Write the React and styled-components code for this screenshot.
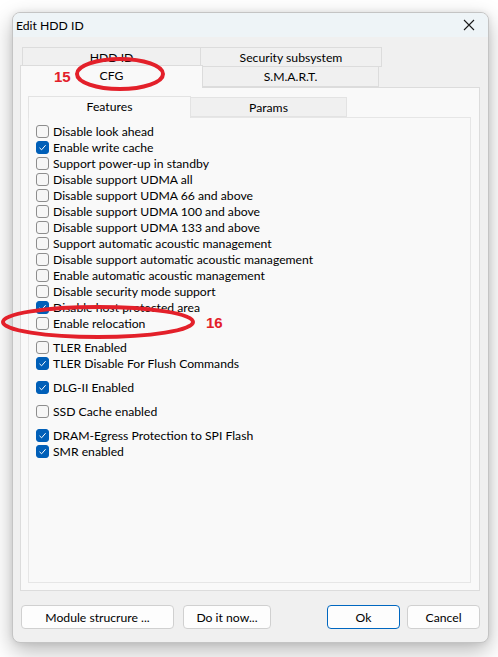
import React from 'react'
import styled, { createGlobalStyle } from 'styled-components'

const GlobalStyle = createGlobalStyle`
  html, body {
    margin: 0;
    padding: 0;
    background: #ffffff;
  }
  body {
    font-family: Lato, "Noto Sans", sans-serif;
    font-size: 12.2px;
    color: #000;
  }
`

const features = [
  [
    { text: 'Disable look ahead' },
    { text: 'Enable write cache', checked: true },
    { text: 'Support power-up in standby' },
    { text: 'Disable support UDMA all' },
    { text: 'Disable support UDMA 66 and above' },
    { text: 'Disable support UDMA 100 and above' },
    { text: 'Disable support UDMA 133 and above' },
    { text: 'Support automatic acoustic management' },
    { text: 'Disable support automatic acoustic management' },
    { text: 'Enable automatic acoustic management' },
    { text: 'Disable security mode support' },
    { text: 'Disable host protected area', checked: true },
    { text: 'Enable relocation' },
  ],
  [
    { text: 'TLER Enabled' },
    { text: 'TLER Disable For Flush Commands', checked: true },
  ],
  [{ text: 'DLG-II Enabled', checked: true }],
  [{ text: 'SSD Cache enabled' }],
  [
    { text: 'DRAM-Egress Protection to SPI Flash', checked: true },
    { text: 'SMR enabled', checked: true },
  ],
]

const Page = styled.div`
  position: relative;
  width: 498px;
  height: 657px;
  padding: 12px 0 0 12px;
  box-sizing: border-box;
`

const Window = styled.div`
  width: 477px;
  height: 631px;
  box-sizing: border-box;
  border: 1px solid #c4c4c4;
  border-radius: 8px;
  background: #f0f0f0;
  box-shadow: 0 8px 22px rgba(0, 0, 0, 0.28), 0 0 6px rgba(0, 0, 0, 0.08);
  overflow: hidden;
  display: flex;
  flex-direction: column;
`

const TitleBar = styled.div`
  height: 24px;
  flex: none;
  background: #eef4f7;
  display: flex;
  align-items: center;
  justify-content: space-between;
  padding: 0 13px 0 3px;
`

const CloseIcon = () => (
  <svg width="12" height="12" viewBox="0 0 12 12">
    <path d="M1 1 L11 11 M11 1 L1 11" stroke="#1a1a1a" strokeWidth="1.1" fill="none" />
  </svg>
)

const Body = styled.div`
  flex: 1;
  display: flex;
  flex-direction: column;
  padding: 10px 8px 13px 7px;
`

const TabRow = styled.div`
  display: flex;
  align-items: flex-end;
  height: ${p => p.$h}px;
  padding-left: ${p => p.$indent || 0}px;
  margin-top: ${p => p.$mt || 0}px;
`

const Tab = styled.div`
  box-sizing: border-box;
  width: ${p => p.$w}px;
  height: ${p => (p.$active ? p.$h + 2 : p.$h)}px;
  display: flex;
  align-items: center;
  justify-content: center;
  padding-bottom: ${p => (p.$active ? 3 : 0)}px;
  border: 1px solid #dcdcdc;
  border-bottom: ${p => (p.$active ? 'none' : '1px solid #dcdcdc')};
  background: ${p => (p.$active ? '#f9f9f9' : '#f0f0f0')};
  margin-bottom: ${p => (p.$active ? -1 : 0)}px;
  position: relative;
  z-index: ${p => (p.$active ? 2 : 0)};
  & + & {
    border-left: ${p => (p.$active ? '1px solid #dcdcdc' : 'none')};
  }
`

const Panel = styled.div`
  flex: 1;
  display: flex;
  flex-direction: column;
  box-sizing: border-box;
  border: 1px solid #dcdcdc;
  background: #f9f9f9;
  padding: ${p => p.$pad};
`

const InnerTab = styled(Tab)`
  background: ${p => (p.$active ? '#f9f9f9' : '#f0f0f0')};
  border-color: #e3e3e3;
`

const InnerPanel = styled(Panel)`
  border-color: #e6e6e6;
  background: #f9f9f9;
  padding: 5px 0 0 7px;
`

const Group = styled.div`
  margin-bottom: 8px;
`

const Row = styled.label`
  display: flex;
  align-items: center;
  height: 16px;
  white-space: nowrap;
`

const Box = styled.span`
  width: 13px;
  height: 13px;
  box-sizing: border-box;
  border-radius: 3px;
  border: 1px solid ${p => (p.$checked ? '#005fb8' : '#8d8d8d')};
  background: ${p => (p.$checked ? '#005fb8' : '#f6f6f6')};
  margin-right: 4px;
  display: flex;
  align-items: center;
  justify-content: center;
  flex: none;
`

const Check = () => (
  <svg width="9" height="9" viewBox="0 0 9 9">
    <path d="M1.5 4.8 L3.6 6.8 L7.6 2.2" stroke="#fff" strokeWidth="1" fill="none" />
  </svg>
)

const Checkbox = ({ text, checked }) => (
  <Row>
    <Box $checked={checked}>{checked && <Check />}</Box>
    <span>{text}</span>
  </Row>
)

const Buttons = styled.div`
  display: flex;
  align-items: center;
  margin-top: 14px;
  padding-left: 1px;
`

const Button = styled.div`
  box-sizing: border-box;
  width: ${p => p.$w}px;
  height: 24px;
  margin-right: ${p => p.$mr || 0}px;
  margin-left: ${p => (p.$push ? 'auto' : '0')};
  border: 1px solid ${p => (p.$default ? '#0067c0' : '#d0d0d0')};
  border-radius: 4px;
  background: #fdfdfd;
  display: flex;
  align-items: center;
  justify-content: center;
`

const Overlay = styled.svg`
  position: absolute;
  left: 0;
  top: 0;
  pointer-events: none;
  z-index: 10;
`

const Mark = styled.text`
  font-family: "Liberation Sans", Arial, sans-serif;
  font-weight: bold;
  font-size: 15px;
  fill: #e3202a;
`

export default function App() {
  return (
    <Page>
      <GlobalStyle />
      <Window>
        <TitleBar>
          <span>Edit HDD ID</span>
          <CloseIcon />
        </TitleBar>
        <Body>
          <TabRow $h={20} $indent={2}>
            <Tab $w={179} $h={20}>HDD ID</Tab>
            <Tab $w={181} $h={20}>Security subsystem</Tab>
          </TabRow>
          <TabRow $h={21} $mt={-1}>
            <Tab $w={183} $h={21} $active>CFG</Tab>
            <Tab $w={176} $h={21}>S.M.A.R.T.</Tab>
          </TabRow>
          <Panel $pad="8px 8px 7px 7px">
            <TabRow $h={21}>
              <InnerTab $w={163} $h={20} $active>Features</InnerTab>
              <InnerTab $w={156} $h={20}>Params</InnerTab>
            </TabRow>
            <InnerPanel>
              {features.map((group, i) => (
                <Group key={i}>
                  {group.map(item => (
                    <Checkbox key={item.text} {...item} />
                  ))}
                </Group>
              ))}
            </InnerPanel>
          </Panel>
          <Buttons>
            <Button $w={153} $mr={9}>Module strucrure ...</Button>
            <Button $w={88}>Do it now...</Button>
            <Button $w={73} $push $default $mr={7}>Ok</Button>
            <Button $w={73}>Cancel</Button>
          </Buttons>
        </Body>
      </Window>
      <Overlay width="498" height="657" viewBox="0 0 498 657">
        <ellipse cx="120" cy="74" rx="43" ry="15" fill="none" stroke="#e3202a" strokeWidth="4" />
        <Mark x="54" y="82">15</Mark>
        <ellipse cx="98" cy="322" rx="95" ry="15" fill="none" stroke="#e3202a" strokeWidth="4" />
        <Mark x="206" y="328">16</Mark>
      </Overlay>
    </Page>
  )
}
